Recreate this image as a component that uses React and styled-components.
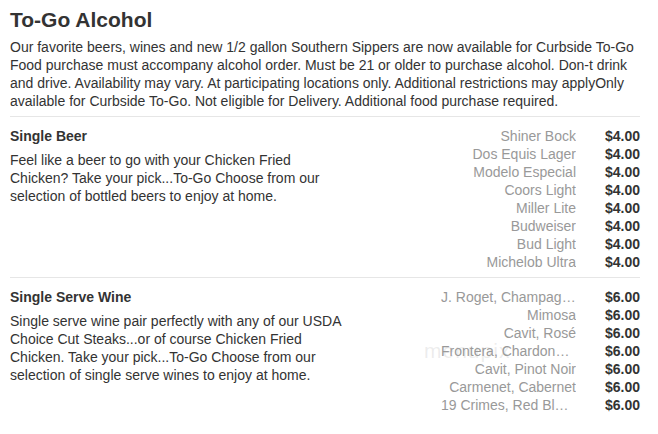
import { Fragment } from 'react';
import styled, { createGlobalStyle } from 'styled-components';

const GlobalStyle = createGlobalStyle`
	body {
		margin: 0;
		background: #fff;
		font-family: "Liberation Sans", Arial, sans-serif;
		color: #333;
	}
`;

const Page = styled.div`
	position: relative;
	padding: 8px 18px 0 10px;
	width: 630px;
`;

const Title = styled.h2`
	margin: 0;
	font-size: 21px;
	line-height: 24px;
	font-weight: bold;
	color: #333;
`;

const Intro = styled.p`
	margin: 6px 0;
	font-size: 14px;
	line-height: 18px;
	color: #333;
`;

const Section = styled.div`
	display: flex;
	justify-content: space-between;
	border-top: 1px solid #e6e6e6;
	padding: 10px 0 6px;
`;

const Info = styled.div`
	width: 340px;
`;

const SectionName = styled.h3`
	margin: 0;
	font-size: 14px;
	line-height: 18px;
	font-weight: bold;
	color: #333;
`;

const SectionDesc = styled.p`
	margin: 6px 0 0;
	font-size: 14px;
	line-height: 18px;
	color: #333;
`;

const ItemList = styled.div`
	display: grid;
	grid-template-columns: 135px 64px;
	grid-auto-rows: 18px;
	font-size: 14px;
	line-height: 18px;
`;

const ItemName = styled.div`
	color: #999;
	text-align: right;
	white-space: nowrap;
	overflow: hidden;
	text-overflow: ellipsis;
	font-kerning: none;
`;

const Price = styled.div`
	font-weight: bold;
	text-align: right;
	color: #333;
`;

const Watermark = styled.div`
	position: absolute;
	left: 424px;
	top: 339px;
	font-size: 21px;
	letter-spacing: 1px;
	color: rgba(170, 170, 170, 0.22);
	pointer-events: none;
`;

const sections = [
	{
		name: 'Single Beer',
		desc: 'Feel like a beer to go with your Chicken Fried Chicken? Take your pick...To-Go Choose from our selection of bottled beers to enjoy at home.',
		items: [
			['Shiner Bock', '$4.00'],
			['Dos Equis Lager', '$4.00'],
			['Modelo Especial', '$4.00'],
			['Coors Light', '$4.00'],
			['Miller Lite', '$4.00'],
			['Budweiser', '$4.00'],
			['Bud Light', '$4.00'],
			['Michelob Ultra', '$4.00'],
		],
	},
	{
		name: 'Single Serve Wine',
		desc: 'Single serve wine pair perfectly with any of our USDA Choice Cut Steaks...or of course Chicken Fried Chicken. Take your pick...To-Go Choose from our selection of single serve wines to enjoy at home.',
		items: [
			['J. Roget, Champagne', '$6.00'],
			['Mimosa', '$6.00'],
			['Cavit, Rosé', '$6.00'],
			['Frontera, Chardonnay', '$6.00'],
			['Cavit, Pinot Noir', '$6.00'],
			['Carmenet, Cabernet', '$6.00'],
			['19 Crimes, Red Blend', '$6.00'],
		],
	},
];

const App = () => {
	return (
		<Page>
			<GlobalStyle />
			<Title>To-Go Alcohol</Title>
			<Intro>
				Our favorite beers, wines and new 1/2 gallon Southern Sippers are now available for Curbside To-Go Food purchase must accompany alcohol order. Must be 21 or older to purchase alcohol. Don-t drink and drive. Availability may vary. At participating locations only. Additional restrictions may applyOnly available for Curbside To-Go. Not eligible for Delivery. Additional food purchase required.
			</Intro>
			{sections.map((s) => (
				<Section key={s.name}>
					<Info>
						<SectionName>{s.name}</SectionName>
						<SectionDesc>{s.desc}</SectionDesc>
					</Info>
					<ItemList>
						{s.items.map(([name, price]) => (
							<Fragment key={name}>
								<ItemName title={name}>{name}</ItemName>
								<Price>{price}</Price>
							</Fragment>
						))}
					</ItemList>
				</Section>
			))}
			<Watermark>menupix</Watermark>
		</Page>
	);
};

export default App;
